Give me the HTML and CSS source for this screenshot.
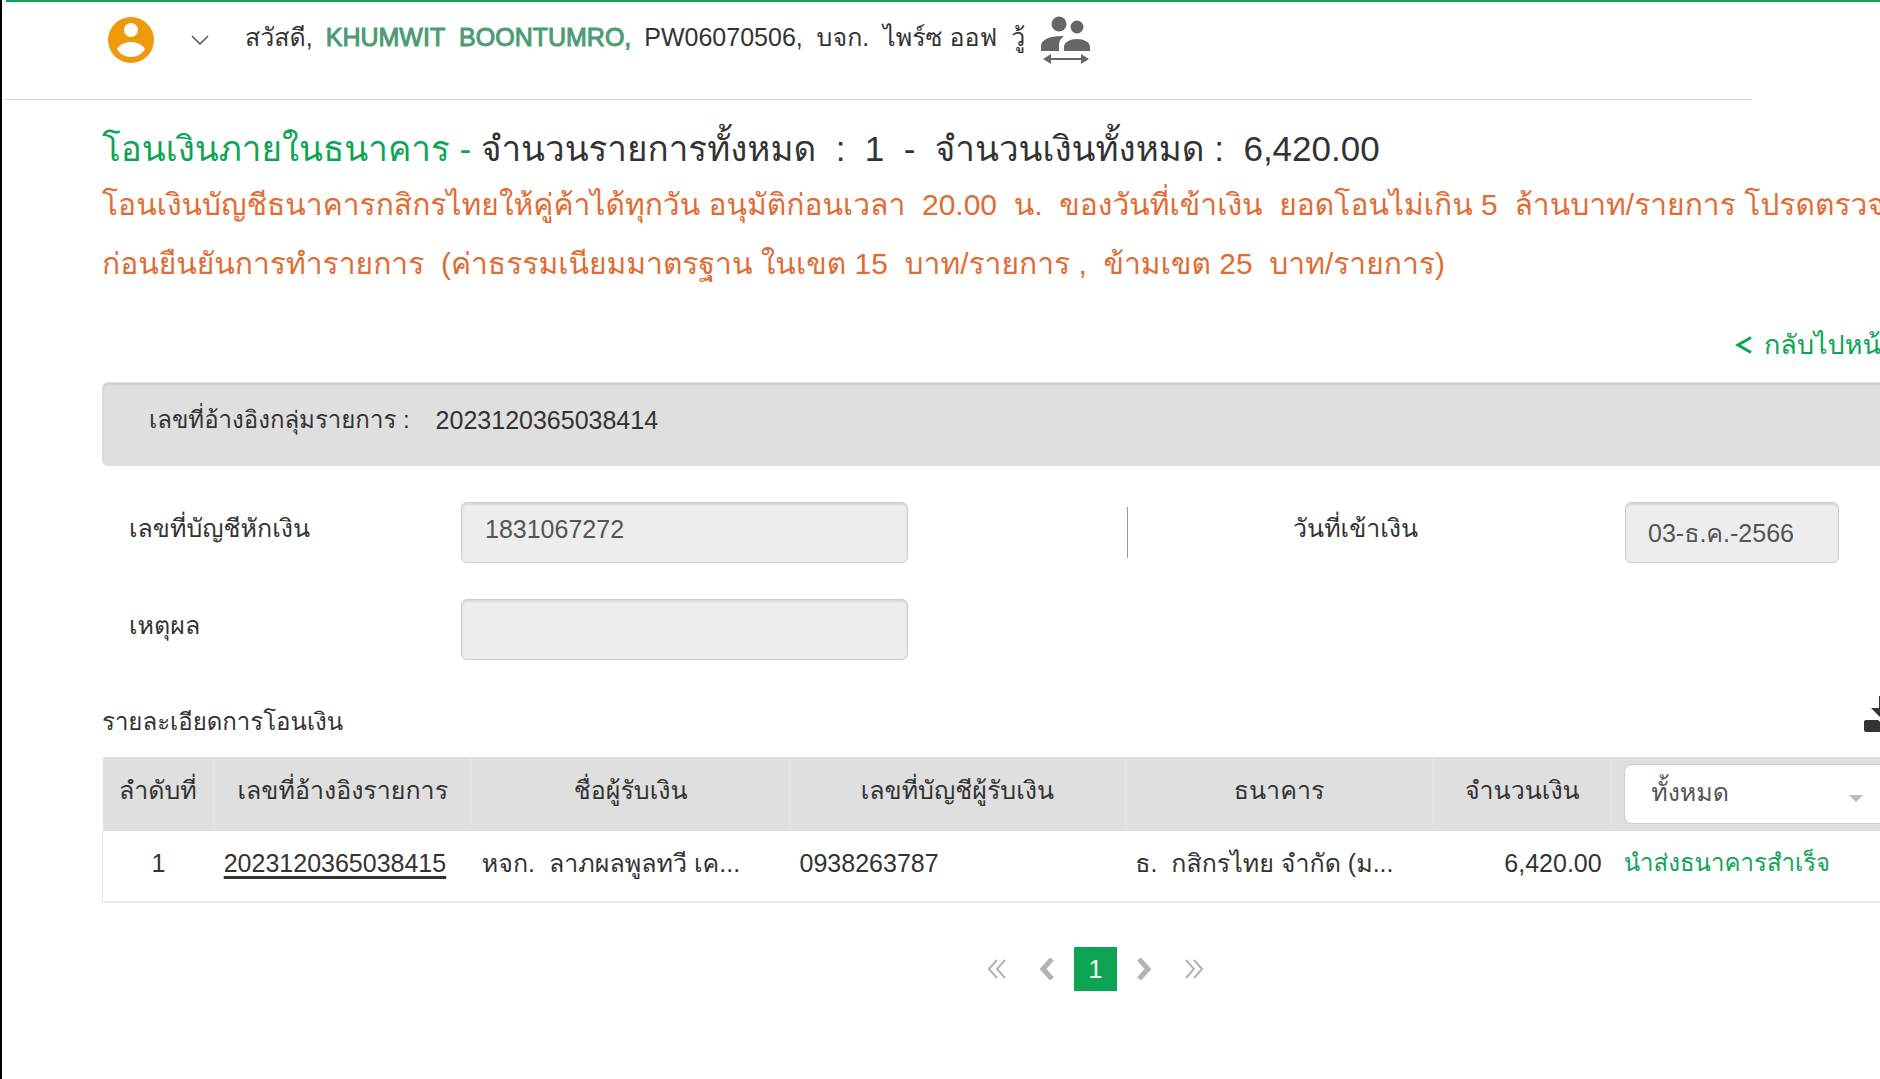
FILE: index.html
```html
<!DOCTYPE html>
<html lang="th">
<head>
    <meta charset="UTF-8">
    <meta name="viewport" content="width=device-width, initial-scale=1.0">
    <title>โอนเงินภายในธนาคาร</title>
    <link rel="stylesheet" href="styles.css">
</head>
<body>
    <header class="topbar">
        <svg class="avatar" viewBox="0 0 48 48" aria-hidden="true">
            <circle cx="24" cy="24" r="23" fill="#ee9b0b"/>
            <circle cx="24" cy="14" r="7" fill="#fff"/>
            <path d="M10 33C13 28 19 26 24 26s11 2 14 7c-3 5-8 8-14 8s-11-3-14-8z" fill="#fff"/>
        </svg>
        <button class="menu-toggle" aria-label="เมนู">
            <svg width="18" height="10" viewBox="0 0 18 10"><path d="M1 1l8 8 8-8" fill="none" stroke="#555" stroke-width="1.5"/></svg>
        </button>
        <div class="greeting">
            <span>สวัสดี,</span>
            <span class="user-name">KHUMWIT&nbsp; BOONTUMRO,</span>
            <span class="company">PW06070506,&nbsp; บจก.&nbsp; ไพร์ซ ออฟ&nbsp; วู้</span>
        </div>
        <button class="switch-user" aria-label="เปลี่ยนผู้ใช้">
            <svg width="50" height="48" viewBox="0 0 50 48" fill="#666">
                <circle cx="18" cy="8" r="7.5"/>
                <circle cx="36" cy="11" r="6.5"/>
                <path d="M0 35v-5c0-6 8-10 21-10h2c-4 3-5 6-5 10v5z"/>
                <path d="M23 35v-4c0-5 6-8 13-8s13 3 13 8v4z"/>
                <path d="M2 43l8-5v4h30v-4l8 5-8 5v-4H10v4z"/>
            </svg>
        </button>
    </header>

    <main class="content">
        <h1 class="title"><span class="title-green">โอนเงินภายในธนาคาร -</span> จำนวนรายการทั้งหมด&nbsp; :&nbsp; 1&nbsp; -&nbsp; จำนวนเงินทั้งหมด :&nbsp; 6,420.00</h1>
        <p class="notice">โอนเงินบัญชีธนาคารกสิกรไทยให้คู่ค้าได้ทุกวัน อนุมัติก่อนเวลา&nbsp; 20.00&nbsp; น.&nbsp; ของวันที่เข้าเงิน&nbsp; ยอดโอนไม่เกิน 5&nbsp; ล้านบาท/รายการ โปรดตรวจสอบ<br>ก่อนยืนยันการทำรายการ&nbsp; (ค่าธรรมเนียมมาตรฐาน ในเขต 15&nbsp; บาท/รายการ ,&nbsp; ข้ามเขต 25&nbsp; บาท/รายการ)</p>
        <div class="back-row">
            <a href="#" class="back-link"><svg width="17" height="18" viewBox="0 0 17 18"><path d="M16 1.500L3 9l13 7.500" fill="none" stroke="#0da454" stroke-width="3"/></svg>กลับไปหน้าก่อน</a>
        </div>

        <div class="group-ref"><span class="thai-small">เลขที่อ้างอิงกลุ่มรายการ :</span><span>2023120365038414</span></div>

        <form class="details">
            <label for="account">เลขที่บัญชีหักเงิน</label>
            <input type="text" id="account" value="1831067272" disabled>
            <span class="divider"></span>
            <label for="date">วันที่เข้าเงิน</label>
            <input type="text" id="date" class="date" value="03-ธ.ค.-2566" disabled>
            <label for="reason">เหตุผล</label>
            <input type="text" id="reason" disabled>
        </form>

        <div class="section-head">
            <h2>รายละเอียดการโอนเงิน</h2>
            <button class="download" aria-label="ดาวน์โหลด">
                <svg width="42" height="36" viewBox="0 0 42 36" fill="#333">
                    <path d="M15 0h12v12h8L21 26 7 12h8z"/>
                    <path d="M2 24h12l7 7 7-7h12q2 0 2 2v8q0 2-2 2H2q-2 0-2-2v-8q0-2 2-2z"/>
                </svg>
            </button>
        </div>

        <table class="transfers">
            <colgroup>
                <col class="col-no"><col class="col-ref"><col class="col-name"><col class="col-account"><col class="col-bank"><col class="col-amount"><col>
            </colgroup>
            <thead>
                <tr>
                    <th>ลำดับที่</th>
                    <th>เลขที่อ้างอิงรายการ</th>
                    <th>ชื่อผู้รับเงิน</th>
                    <th>เลขที่บัญชีผู้รับเงิน</th>
                    <th>ธนาคาร</th>
                    <th>จำนวนเงิน</th>
                    <th class="filter">
                        <div class="select-box">
                            <select aria-label="สถานะ"><option>ทั้งหมด</option></select>
                        </div>
                    </th>
                </tr>
            </thead>
            <tbody>
                <tr>
                    <td class="center">1</td>
                    <td><a href="#" class="ref-link">2023120365038415</a></td>
                    <td>หจก.&nbsp; ลาภผลพูลทวี เค...</td>
                    <td>0938263787</td>
                    <td>ธ.&nbsp; กสิกรไทย จำกัด (ม...</td>
                    <td class="right">6,420.00</td>
                    <td class="status">นำส่งธนาคารสำเร็จ</td>
                </tr>
            </tbody>
        </table>

        <nav class="pager">
            <button aria-label="หน้าแรก"><svg width="18" height="20" viewBox="0 0 18 20"><path d="M9 1L1 10l8 9M17 1l-8 9 8 9" stroke-width="2"/></svg></button>
            <button aria-label="ก่อนหน้า"><svg width="18" height="22" viewBox="0 0 18 22"><path d="M14 1L5 11l9 10" stroke-width="5"/></svg></button>
            <button class="current">1</button>
            <button aria-label="ถัดไป"><svg width="18" height="22" viewBox="0 0 18 22"><path d="M4 1l9 10-9 10" stroke-width="5"/></svg></button>
            <button aria-label="หน้าสุดท้าย"><svg width="18" height="20" viewBox="0 0 18 20"><path d="M1 1l8 9-8 9M9 1l8 9-8 9" stroke-width="2"/></svg></button>
        </nav>
    </main>
</body>
</html>
```
FILE: styles.css
```css
* {
    box-sizing: border-box;
}
html {
    overflow-x: hidden;
    background: #fff;
}
body {
    margin: 0;
    min-height: 100vh;
    overflow-x: hidden;
    border-left: 2px solid #000;
    color: #333;
    font-family: "Liberation Sans", "Loma", "Garuda", "Noto Sans Thai", sans-serif;
    font-size: 25px;
    line-height: 36px;
}
body::before {
    content: "";
    display: block;
    height: 2px;
    margin: 0 0 -2px 4px;
    background: #0da454;
}
button {
    padding: 0;
    border: none;
    background: none;
    font: inherit;
    cursor: pointer;
}
svg {
    display: block;
}
a {
    color: inherit;
}
.topbar {
    display: flex;
    align-items: flex-start;
    height: 100px;
    width: 93vw;
    margin-left: 2px;
    padding: 16px 0 0 103px;
    border-bottom: 1px solid #ddd;
}
.avatar {
    width: 48px;
    height: 48px;
}
.menu-toggle {
    margin: 19px 36px 0;
}
.greeting {
    display: flex;
    gap: 13px;
    padding-top: 3px;
    white-space: nowrap;
}
.user-name {
    color: #4c9c72;
    -webkit-text-stroke: 1px #4c9c72;
}
.switch-user {
    margin-left: 16px;
}
.content {
    width: 111vw;
    padding-left: 100px;
    white-space: nowrap;
}
.title {
    margin: 0;
    padding-top: 23px;
    font-size: 35px;
    font-weight: normal;
    line-height: 52px;
}
.title-green {
    color: #0da454;
}
.notice {
    margin: 0;
    color: #e06c34;
    font-size: 30px;
    line-height: 59px;
}
.back-row {
    padding: 34px 0 19px 1633px;
}
.back-link {
    display: flex;
    align-items: center;
    gap: 12px;
    color: #0da454;
    font-size: 27px;
    text-decoration: none;
}
.group-ref {
    display: flex;
    gap: 26px;
    height: 84px;
    padding: 19px 46px;
    border: 1px solid #dadada;
    border-radius: 6px;
    background: #dfdfdf;
    box-shadow: inset 0 2px 2px #d0d0d0;
}
.thai-small {
    font-size: 24px;
}
.details {
    display: grid;
    grid-template-columns: 332px 447px 385px 332px 214px;
    row-gap: 36px;
    padding: 36px 0 0 27px;
}
.details label {
    padding-top: 8px;
}
.details input {
    height: 61px;
    min-width: 0;
    padding: 0 23px 6px;
    border: 1px solid #ccc;
    border-radius: 6px;
    background: #ededed;
    box-shadow: inset 0 2px 2px #d8d8d8;
    color: #555;
    font: inherit;
}
.details .date {
    padding: 0 22px;
}
.divider {
    width: 1px;
    height: 51px;
    margin: 5px 0 0 219px;
    background: #999;
}
.section-head {
    display: flex;
    padding: 36px 0 17px;
}
.section-head h2 {
    width: 1762px;
    margin: 0;
    padding-top: 8px;
    font-size: 24px;
    font-weight: normal;
}
.download {
    height: 36px;
}
.transfers {
    width: 100%;
    table-layout: fixed;
    border-collapse: collapse;
}
.col-no { width: 5.6%; }
.col-ref { width: 13%; }
.col-name { width: 16%; }
.col-account { width: 16.9%; }
.col-bank { width: 15.5%; }
.col-amount { width: 9%; }
.transfers th {
    height: 74px;
    padding: 0 10px 8px;
    border-right: 1px solid #e6e6e6;
    background: #dfdfdf;
    font-weight: normal;
}
.transfers td {
    height: 71px;
    padding: 0 10px 6px;
    border-bottom: 2px solid #e6e6e6;
}
.transfers td:first-child {
    border-left: 1px solid #e6e6e6;
}
.center {
    text-align: center;
}
.transfers .right {
    text-align: right;
}
.transfers .filter {
    padding: 0 12px;
}
.select-box {
    position: relative;
    width: 266px;
}
.select-box::after {
    content: "";
    position: absolute;
    top: 31px;
    left: 225px;
    border: 7px solid transparent;
    border-top-color: #bbb;
    border-bottom: none;
}
.select-box select {
    width: 100%;
    height: 60px;
    padding: 0 26px 4px;
    appearance: none;
    border: 1px solid #ccc;
    border-radius: 8px;
    background: #fff;
    color: #555;
    font: inherit;
}
.ref-link {
    text-decoration-thickness: 3px;
    text-underline-offset: 4px;
}
.transfers .status {
    padding-left: 12px;
    color: #0da454;
    font-size: 24px;
}
.pager {
    display: flex;
    justify-content: center;
    align-items: center;
    gap: 32px;
    padding-top: 44px;
}
.pager svg {
    fill: none;
    stroke: #b3b3b3;
}
.pager .current {
    width: 43px;
    height: 44px;
    margin: 0 -14px;
    background: #0da454;
    color: #fff;
}
```
